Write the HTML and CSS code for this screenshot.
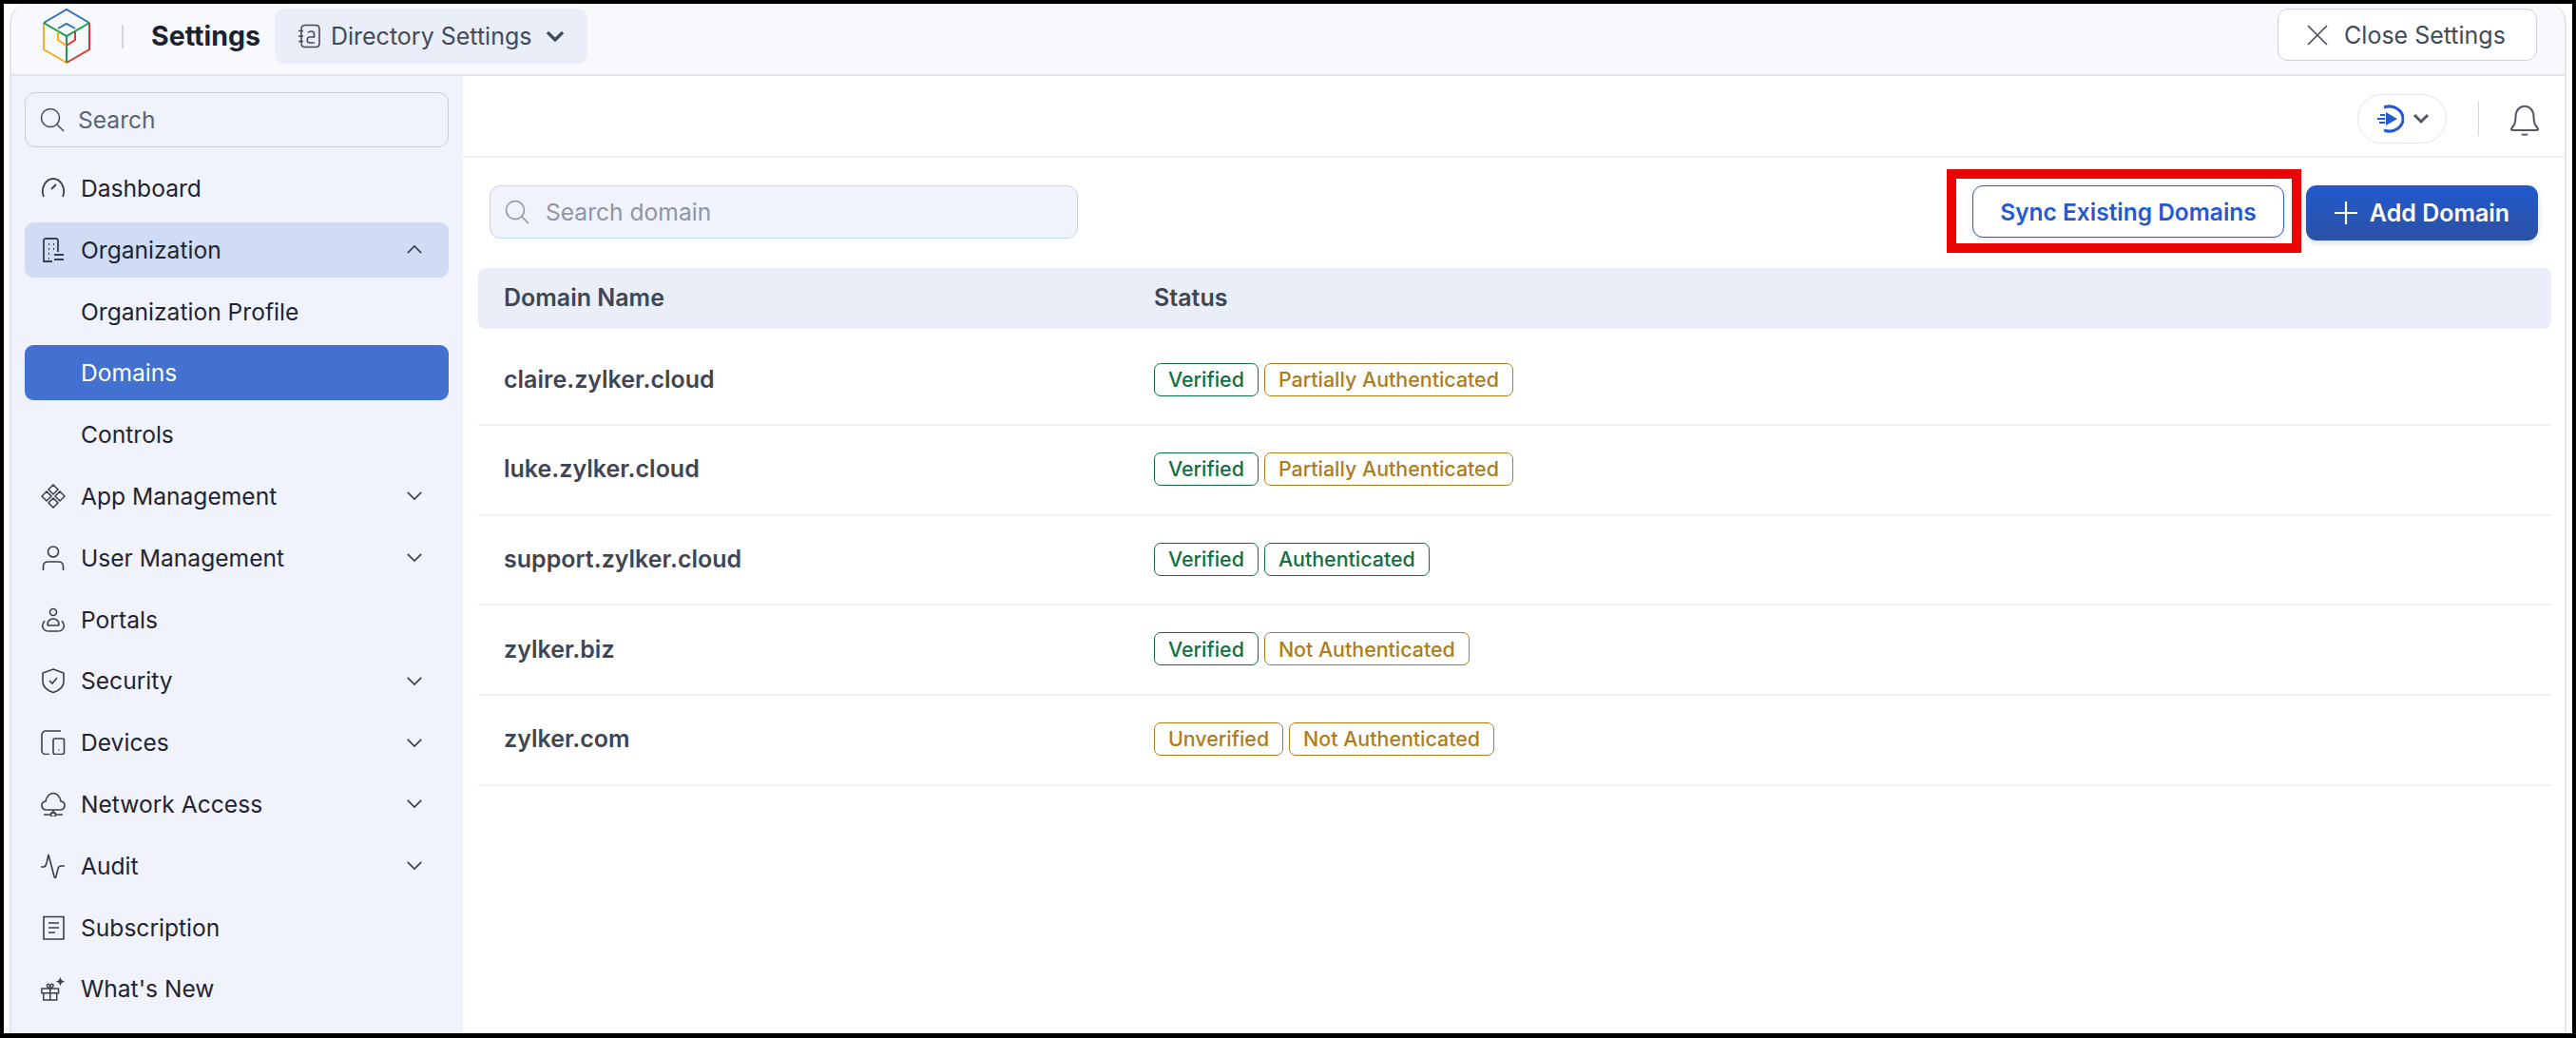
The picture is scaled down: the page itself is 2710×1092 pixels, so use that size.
FILE: index.html
```html
<!DOCTYPE html>
<html>
<head>
  <meta charset="utf8" />
  <title>Domains - Directory Settings</title>
  <link rel="stylesheet" href="styles.css">
</head>
<body>
  <div class="window">
    <header class="topbar">
      <svg class="logo" viewBox="0 0 50 58" fill="none" stroke-width="2">
        <path d="M1 15L25 1L49 15" stroke="#2d72b8"/>
        <path d="M1 15V43L25 57" stroke="#f5ad1c"/>
        <path d="M49 15V43L25 57" stroke="#e5332d"/>
        <path d="M1 15L25 29L49 15M25 29V57" stroke="#14a04b"/>
        <path d="M16 21L25 16L34 21" stroke="#2d72b8"/>
        <path d="M16 24V33L25 39" stroke="#f5ad1c"/>
        <path d="M34 24V33L25 39" stroke="#e5332d"/>
      </svg>
      <span class="topbar__sep"></span>
      <span class="topbar__title">Settings</span>
      <div class="switcher">
        <svg class="icon" viewBox="0 0 26 26" fill="none" stroke="#434a57" stroke-width="1.6">
          <path d="M5 5.500C5 3 6.500 1.500 9 1.500H20C22.500 1.500 24 3 24 5.500V20.500C24 23 22.500 24.500 20 24.500H9C6.500 24.500 5 23 5 20.500"/>
          <path d="M2 7.500H7M2 13H7M2 18.500H7M5 5.500V20.500"/>
          <path d="M12 9.500C13 7.500 18.500 7 18.500 10.500V14H13.500C10.500 14 10.500 20 13.500 20H19"/>
        </svg>
        <span>Directory Settings</span>
        <svg class="switcher__caret" viewBox="0 0 20 12" fill="none" stroke="#434a57" stroke-width="3.2"><path d="M2 2L10 10L18 2"/></svg>
      </div>
      <button class="close-btn">
        <svg viewBox="0 0 22 22" fill="none" stroke="#434a57" stroke-width="1.6"><path d="M1 1L21 21M21 1L1 21"/></svg>
        Close Settings
      </button>
    </header>

    <div class="content">
      <aside class="sidebar">
        <div class="side-search">
          <svg viewBox="0 0 26 26" fill="none" stroke="#4b5260" stroke-width="1.6"><circle cx="11" cy="11" r="9.500"/><path d="M18 18L25 25"/></svg>
          <span>Search</span>
        </div>
        <nav class="nav">
          <a class="nav__item">
            <svg class="icon" viewBox="0 0 26 26" fill="none" stroke="#383f4b" stroke-width="1.8"><path d="M3 22C-1 12 6 3 13 3S27 12 23 22"/><path d="M11 14L16 9"/></svg>
            <span>Dashboard</span>
          </a>
          <a class="nav__item nav__item--open">
            <svg class="icon" viewBox="0 0 26 26" fill="none" stroke="#383f4b" stroke-width="1.800"><path d="M18 15V3C18 2 17 1 16 1H5C4 1 3 2 3 3V25H12"/><path d="M8 7H9M13 7H14M8 12H9M13 12H14M8 17H9M8 22H9M14 18H24M14 23H24"/></svg>
            <span>Organization</span>
            <svg class="nav__caret" viewBox="0 0 20 12" fill="none" stroke="#383f4b" stroke-width="1.800"><path d="M2 10L10 2L18 10"/></svg>
          </a>
          <a class="nav__item nav__item--sub">Organization Profile</a>
          <a class="nav__item nav__item--sub nav__item--active">Domains</a>
          <a class="nav__item nav__item--sub">Controls</a>
          <a class="nav__item">
            <svg class="icon" viewBox="0 0 26 26" fill="none" stroke="#383f4b" stroke-width="1.500"><path d="M13 1L18 6L13 11L8 6ZM13 15L18 20L13 25L8 20ZM6 8L11 13L6 18L1 13ZM20 8L25 13L20 18L15 13Z"/></svg>
            <span>App Management</span>
            <svg class="nav__caret" viewBox="0 0 20 12" fill="none" stroke="#383f4b" stroke-width="1.800"><path d="M2 2L10 10L18 2"/></svg>
          </a>
          <a class="nav__item">
            <svg class="icon" viewBox="0 0 26 26" fill="none" stroke="#383f4b" stroke-width="1.600"><circle cx="13" cy="6.500" r="5.500"/><path d="M2.500 26V22C2.500 19 4.500 17 7.500 17H18.500C21.500 17 23.500 19 23.500 22V26"/></svg>
            <span>User Management</span>
            <svg class="nav__caret" viewBox="0 0 20 12" fill="none" stroke="#383f4b" stroke-width="1.800"><path d="M2 2L10 10L18 2"/></svg>
          </a>
          <a class="nav__item">
            <svg class="icon" viewBox="0 0 26 26" fill="none" stroke="#383f4b" stroke-width="1.600"><circle cx="13" cy="5" r="3.500"/><path d="M7 19C7 14 9.500 12 13 12S19 14 19 19"/><path d="M4 14C-1 20 3 25 8 25H18C23 25 27 20 22 14M7 19H19"/></svg>
            <span>Portals</span>
          </a>
          <a class="nav__item">
            <svg class="icon" viewBox="0 0 26 26" fill="none" stroke="#383f4b" stroke-width="1.600"><path d="M13 1L24 5V14C24 20 19 23.500 13 25.500C7 23.500 2 20 2 14V5Z"/><path d="M9 13L12 16L17 10"/></svg>
            <span>Security</span>
            <svg class="nav__caret" viewBox="0 0 20 12" fill="none" stroke="#383f4b" stroke-width="1.800"><path d="M2 2L10 10L18 2"/></svg>
          </a>
          <a class="nav__item">
            <svg class="icon" viewBox="0 0 26 26" fill="none" stroke="#383f4b" stroke-width="1.600"><path d="M21 1H5C3 1 1 3 1 5V22C1 24 3 25.500 5 25.500H9"/><rect x="13" y="9" width="11.500" height="16.500" rx="2"/><path d="M18.500 21H19.500"/></svg>
            <span>Devices</span>
            <svg class="nav__caret" viewBox="0 0 20 12" fill="none" stroke="#383f4b" stroke-width="1.800"><path d="M2 2L10 10L18 2"/></svg>
          </a>
          <a class="nav__item">
            <svg class="icon" viewBox="0 0 26 26" fill="none" stroke="#383f4b" stroke-width="1.600"><path d="M7 19H6C0 19-1 11 5 10C6 4 10 1.500 13 1.500S20 4 21 10C27 11 26 19 20 19Z"/><path d="M13 19V23M3 24H10M16 24H23"/><circle cx="13" cy="24" r="2.500"/></svg>
            <span>Network Access</span>
            <svg class="nav__caret" viewBox="0 0 20 12" fill="none" stroke="#383f4b" stroke-width="1.800"><path d="M2 2L10 10L18 2"/></svg>
          </a>
          <a class="nav__item">
            <svg class="icon" viewBox="0 0 26 26" fill="none" stroke="#383f4b" stroke-width="1.600"><path d="M0 14H3C5 14 5.500 12 6 10L8 1L14 24C14.500 26 15.500 26 16 24L18 16C18.500 14 19.500 13 21 13H25"/></svg>
            <span>Audit</span>
            <svg class="nav__caret" viewBox="0 0 20 12" fill="none" stroke="#383f4b" stroke-width="1.800"><path d="M2 2L10 10L18 2"/></svg>
          </a>
          <a class="nav__item">
            <svg class="icon" viewBox="0 0 26 26" fill="none" stroke="#383f4b" stroke-width="1.600"><path d="M3 1.500V25H24V1.500Z"/><path d="M8 8H19M8 13H19M8 18H15"/></svg>
            <span>Subscription</span>
          </a>
          <a class="nav__item">
            <svg class="icon" viewBox="0 0 28 28" fill="none" stroke="#383f4b" stroke-width="1.600"><path d="M1 14H20V19H1ZM3 19V27H18V19M10.500 14V27"/><path d="M10.500 14C6 13 6 8 9 9C10 9.500 10.500 11 10.500 14C10.500 11 11 9.500 12 9C15 8 15 13 10.500 14Z"/><path d="M22 1L23.500 4.500L27 6L23.500 7.500L22 11L20.500 7.500L17 6L20.500 4.500Z" fill="#383f4b" stroke="none"/></svg>
            <span>What's New</span>
          </a>
        </nav>
      </aside>

      <main class="main">
        <div class="subhead">
          <div class="pill">
            <svg viewBox="0 0 30 30" fill="none" stroke="#2459cf" stroke-width="3"><path d="M9 3C20 -1 29 7 29 15S20 31 9 27"/><path d="M11 8L23 15L11 22Z" fill="#2459cf" stroke="none"/><path d="M5 11H10M2 15H10M4 19H10" stroke-width="2"/></svg>
            <svg class="pill__caret" viewBox="0 0 18 12" fill="none" stroke="#535863" stroke-width="3"><path d="M2 2L9 9L16 2"/></svg>
          </div>
          <span class="subhead__sep"></span>
          <svg class="bell" viewBox="0 0 30 36" fill="none" stroke="#535863" stroke-width="2"><path d="M2 27C5 24 5.500 21 5.500 16C5.500 1 24.500 1 24.500 16C24.500 21 25 24 28 27C30 29 29 30 27 30H3C1 30 0 29 2 27Z"/><path d="M12 34C13.500 35 16.500 35 18 34"/></svg>
        </div>

        <div class="toolbar">
          <div class="domain-search">
            <svg viewBox="0 0 26 26" fill="none" stroke="#8f95a1" stroke-width="1.600"><circle cx="11" cy="11" r="9.500"/><path d="M18 18L25 25"/></svg>
            <span>Search domain</span>
          </div>
          <div class="highlight">
            <button class="btn-sync">Sync Existing Domains</button>
          </div>
          <button class="btn-add">
            <svg viewBox="0 0 24 24" fill="none" stroke="#fff" stroke-width="2.200"><path d="M12 0V24M0 12H24"/></svg>
            Add Domain
          </button>
        </div>

        <div class="table">
          <div class="table__head">
            <div class="col-name">Domain Name</div>
            <div>Status</div>
          </div>
          <div class="table__row">
            <div class="col-name">claire.zylker.cloud</div>
            <div class="tags"><span class="tag tag--ok">Verified</span><span class="tag tag--warn">Partially Authenticated</span></div>
          </div>
          <div class="table__row">
            <div class="col-name">luke.zylker.cloud</div>
            <div class="tags"><span class="tag tag--ok">Verified</span><span class="tag tag--warn">Partially Authenticated</span></div>
          </div>
          <div class="table__row">
            <div class="col-name">support.zylker.cloud</div>
            <div class="tags"><span class="tag tag--ok">Verified</span><span class="tag tag--ok">Authenticated</span></div>
          </div>
          <div class="table__row">
            <div class="col-name">zylker.biz</div>
            <div class="tags"><span class="tag tag--ok">Verified</span><span class="tag tag--warn">Not Authenticated</span></div>
          </div>
          <div class="table__row">
            <div class="col-name">zylker.com</div>
            <div class="tags"><span class="tag tag--warn">Unverified</span><span class="tag tag--warn">Not Authenticated</span></div>
          </div>
        </div>
      </main>
    </div>
  </div>
</body>
</html>
```

FILE: styles.css
```css
*{
  box-sizing: border-box;
}
html, body{
  margin: 0;
  height: 100%;
}
body{
  background: #000;
  padding: 4px 4px 5px 4px;
  font-family: "Inter", "Noto Sans", sans-serif;
  color: #1f2430;
}
button{
  font-family: inherit;
}
svg{
  display: block;
  flex: none;
}
.window{
  height: 1083px;
  background: #fff;
  padding: 0 6px;
  display: flex;
  flex-direction: column;
}
.topbar{
  height: 76px;
  flex: none;
  padding: 5px 29px 0 33px;
  display: flex;
  align-items: flex-start;
  background: #f7f9fd;
  border: 2px solid #e3e5ea;
  border-top: 0;
  border-radius: 20px 20px 0 0;
}
.logo{
  width: 50px;
  height: 58px;
}
.topbar__sep{
  width: 2px;
  height: 25px;
  margin: 17px 29px 0 33px;
  background: #d4d6db;
}
.topbar__title{
  font-size: 28.500px;
  font-weight: 700;
  line-height: 58px;
  color: #1c2230;
}
.switcher{
  margin-left: 15px;
  width: 329px;
  height: 58px;
  padding-left: 23px;
  display: flex;
  align-items: center;
  gap: 10px;
  background: #e9eef9;
  border-radius: 10px;
  font-size: 25px;
  color: #434a57;
}
.switcher__caret{
  width: 20px;
  height: 12px;
  margin-left: 5px;
}
.close-btn{
  margin-left: auto;
  width: 273px;
  height: 55px;
  padding-left: 4px;
  display: flex;
  align-items: center;
  justify-content: center;
  gap: 17px;
  background: #fff;
  border: 1px solid #cfd1d6;
  border-radius: 11px;
  font-size: 25px;
  color: #434a57;
}
.close-btn svg{
  width: 22px;
  height: 22px;
}
.icon{
  width: 26px;
  height: 26px;
}

.content{
  flex: 1;
  display: flex;
  min-height: 0;
  border-left: 2px solid #e3e5ea;
  border-right: 2px solid #e3e5ea;
}
.sidebar{
  width: 475px;
  flex: none;
  padding: 17px 15px 0 14px;
  background: #f0f3fc;
}
.side-search{
  height: 58px;
  padding-left: 15px;
  display: flex;
  align-items: center;
  gap: 14px;
  border: 1px solid #cbced5;
  border-radius: 11px;
  font-size: 24.600px;
  color: #5d6370;
}
.side-search svg{
  width: 26px;
  height: 26px;
}
.nav{
  margin-top: 14px;
}
.nav__item{
  height: 58px;
  margin-bottom: 6.800px;
  padding: 0 27px 0 17px;
  display: flex;
  align-items: center;
  gap: 16px;
  border-radius: 9px;
  font-size: 24.600px;
  color: #1f2430;
}
.nav__item--open{
  background: #d0dbf4;
}
.nav__item--sub{
  padding-left: 59px;
}
.nav__item--active{
  background: #4371d0;
  color: #fff;
}
.nav__caret{
  width: 18px;
  height: 11px;
  margin-left: auto;
}

.main{
  flex: 1;
  min-width: 0;
  padding: 0 14px 0 16px;
}
.subhead{
  height: 86px;
  margin: 0 -14px 0 -16px;
  padding: 5px 27px 0 0;
  display: flex;
  align-items: center;
  justify-content: flex-end;
  border-bottom: 2px solid #f0f1f4;
}
.pill{
  width: 94px;
  height: 52px;
  display: flex;
  align-items: center;
  justify-content: center;
  gap: 9px;
  border: 1px solid #e3e4e7;
  border-radius: 26px;
}
.pill svg{
  width: 30px;
  height: 30px;
}
.pill .pill__caret{
  width: 18px;
  height: 12px;
}
.subhead__sep{
  width: 1px;
  height: 36px;
  margin: 0 33px;
  background: #d4d6db;
}
.bell{
  width: 30px;
  height: 36px;
}
.toolbar{
  height: 116px;
  padding: 29px 14px 0 12px;
  display: flex;
  align-items: flex-start;
}
.domain-search{
  width: 619px;
  height: 56px;
  padding-left: 15px;
  display: flex;
  align-items: center;
  gap: 17px;
  background: #f0f3fc;
  border: 1px solid #c5d5f0;
  border-radius: 11px;
  font-size: 24.600px;
  color: #8f95a1;
}
.domain-search svg{
  width: 26px;
  height: 26px;
}
.highlight{
  margin: -17px 5px 0 auto;
  padding: 7px 8px 6px 17px;
  border: 10px solid #e90606;
  background: #fff;
}
.btn-sync{
  display: block;
  width: 328px;
  height: 55px;
  background: #fff;
  border: 1.500px solid #2a5bd0;
  border-radius: 11px;
  box-shadow: 0 2px 6px rgba(30,60,120,0.12);
  font-size: 24.500px;
  font-weight: 600;
  color: #2459cf;
}
.btn-add{
  width: 244px;
  height: 58px;
  display: flex;
  align-items: center;
  justify-content: center;
  gap: 13px;
  background: linear-gradient(#2159cc, #2b52a4);
  border: 0;
  border-radius: 11px;
  box-shadow: 0 2px 6px rgba(30,60,120,0.2);
  font-size: 25px;
  font-weight: 600;
  color: #fff;
}
.btn-add svg{
  width: 24px;
  height: 24px;
}
.table__head{
  height: 64px;
  padding-left: 27px;
  padding-bottom: 2px;
  display: flex;
  align-items: center;
  background: #e9eef9;
  border-radius: 8px;
  font-size: 25px;
  font-weight: 600;
  color: #3f4552;
}
.col-name{
  width: 684px;
  flex: none;
}
.table__row{
  height: 94.700px;
  padding: 0 0 2px 27px;
  display: flex;
  align-items: center;
  border-bottom: 2px solid #f0f1f4;
  font-size: 25px;
  font-weight: 600;
  color: #3f4552;
}
.table__head + .table__row{
  height: 102px;
  padding-top: 8px;
}
.tags{
  display: flex;
  gap: 6px;
}
.tag{
  height: 35px;
  padding: 0 14px;
  display: flex;
  align-items: center;
  border: 1px solid;
  border-radius: 7px;
  font-size: 21.400px;
  font-weight: 500;
}
.tag--ok{
  color: #10703f;
  border-color: #10703f;
}
.tag--warn{
  color: #ad7d1c;
  border-color: #ad7d1c;
}
```
